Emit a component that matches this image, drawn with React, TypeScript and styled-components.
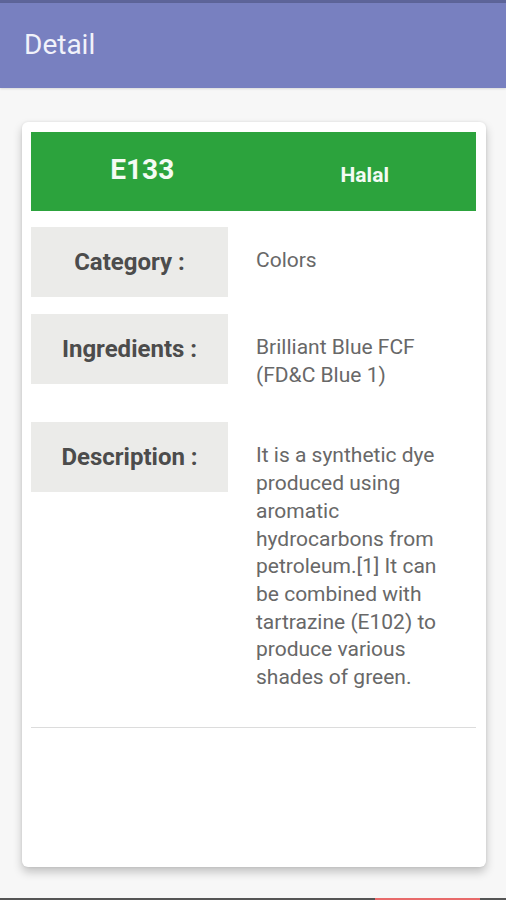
import React from "react";
import styled, { createGlobalStyle } from "styled-components";

const GlobalStyle = createGlobalStyle`
  html, body {
    margin: 0;
    padding: 0;
    background: #f7f7f7;
    font-family: Roboto, "Noto Sans", sans-serif;
  }
`;

type Row = { label: string; value: string };

const rows: Row[] = [
  { label: "Category :", value: "Colors" },
  { label: "Ingredients :", value: "Brilliant Blue FCF (FD&C Blue 1)" },
  {
    label: "Description :",
    value:
      "It is a synthetic dye produced using aromatic hydrocarbons from petroleum.[1] It can be combined with tartrazine (E102) to produce various shades of green.",
  },
];

export default function App() {
  return (
    <Screen>
      <GlobalStyle />
      <StatusStrip />
      <AppBar>
        <Title>Detail</Title>
      </AppBar>
      <Main>
        <Card>
          <Header>
            <Code>E133</Code>
            <Status>Halal</Status>
          </Header>
          <Rows>
            {rows.map((r) => (
              <InfoRow key={r.label}>
                <Label>{r.label}</Label>
                <Value>{r.value}</Value>
              </InfoRow>
            ))}
          </Rows>
          <Divider />
        </Card>
      </Main>
      <NavStrip>
        <NavAccent />
      </NavStrip>
    </Screen>
  );
}

const Screen = styled.div`
  min-height: 100vh;
  display: flex;
  flex-direction: column;
`;

const StatusStrip = styled.div`
  height: 3px;
  background: #5d6499;
`;

const AppBar = styled.header`
  height: 85px;
  background: #7880c0;
  display: flex;
  align-items: center;
  padding-left: 24px;
  box-shadow: 0 1px 2px rgba(0, 0, 0, 0.12);
`;

const Title = styled.h1`
  margin: 0;
  margin-top: -2px;
  font-size: 28px;
  font-weight: 400;
  color: #f1f2fa;
`;

const Main = styled.main`
  padding: 34px 20px 0 22px;
`;

const Card = styled.section`
  background: #fff;
  border-radius: 6px;
  box-shadow: 0 5px 10px rgba(0, 0, 0, 0.22), 0 0 3px rgba(0, 0, 0, 0.08);
  padding: 10px 10px 0 9px;
  height: 745px;
  box-sizing: border-box;
`;

const Header = styled.div`
  height: 79px;
  background: #2ca33d;
  display: grid;
  grid-template-columns: 1fr 1fr;
  align-items: center;
  justify-items: center;
  color: #f4fbf4;
`;

const Code = styled.div`
  font-size: 28px;
  font-weight: 700;
  margin-top: -4px;
`;

const Status = styled.div`
  font-size: 21px;
  font-weight: 700;
  margin-top: 6px;
`;

const Rows = styled.div`
  display: flex;
  flex-direction: column;
  gap: 17px;
  margin-top: 16px;
`;

const InfoRow = styled.div`
  display: grid;
  grid-template-columns: 197px 1fr;
  column-gap: 28px;
  align-items: start;
`;

const Label = styled.div`
  height: 70px;
  background: #ebebe9;
  display: flex;
  align-items: center;
  justify-content: center;
  font-size: 24px;
  font-weight: 700;
  color: #4c4c4c;
`;

const Value = styled.div`
  padding: 20px 0 16px;
  max-width: 196px;
  font-size: 21px;
  line-height: 27.7px;
  color: #686868;
`;

const Divider = styled.hr`
  margin: 19px 0 0;
  border: none;
  border-top: 1px solid #dcdcdc;
`;

const NavStrip = styled.div`
  margin-top: auto;
  height: 2px;
  background: #555;
  display: flex;
`;

const NavAccent = styled.div`
  margin-left: 375px;
  width: 105px;
  background: #e86a6a;
`;
